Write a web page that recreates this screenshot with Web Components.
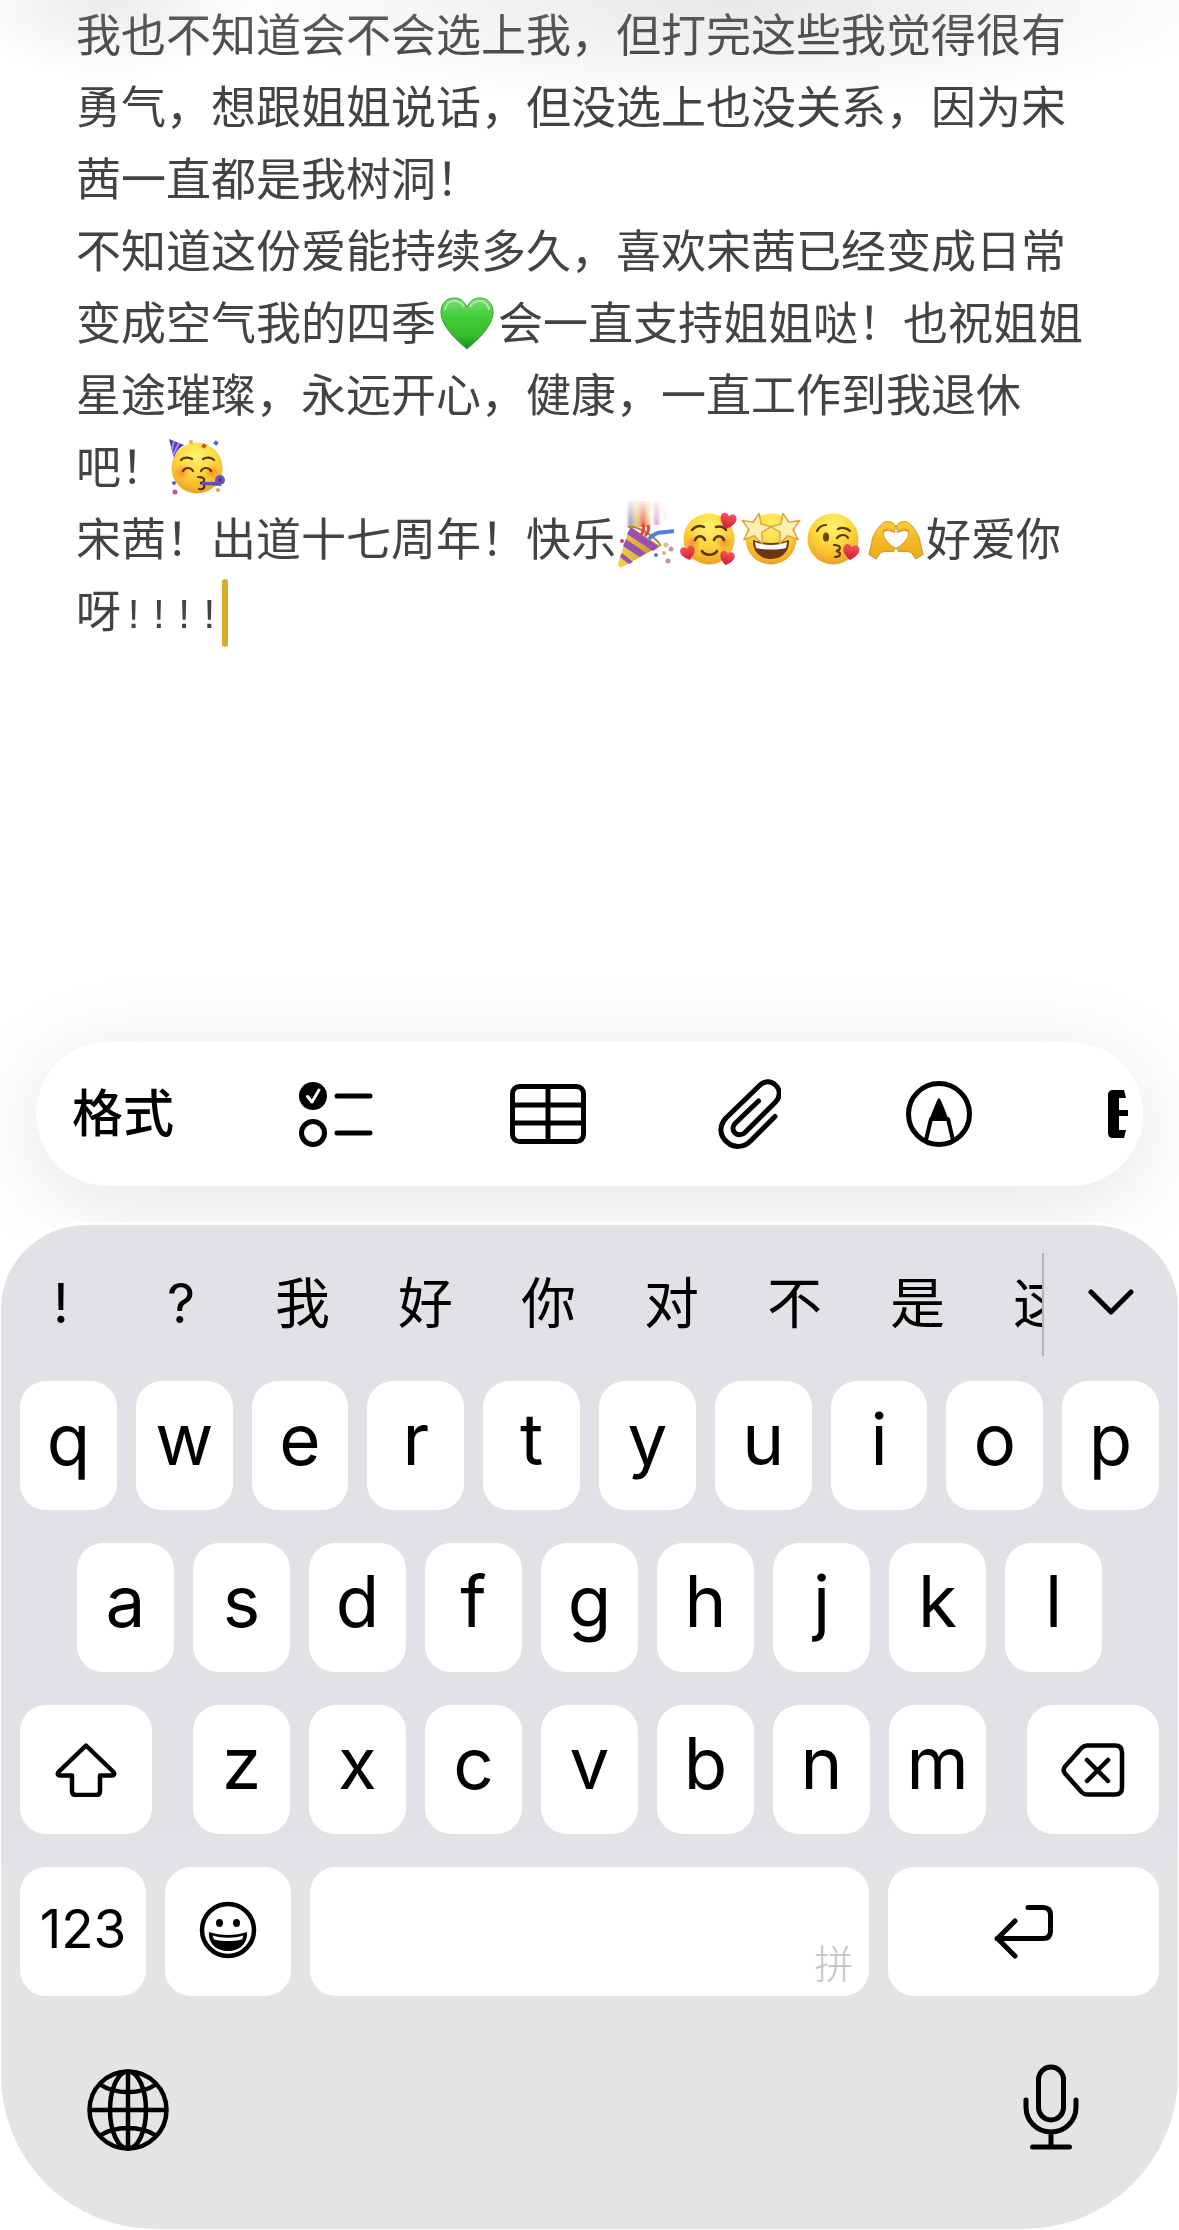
<!DOCTYPE html>
<html lang="zh-CN">
<head>
<meta charset="utf-8">
<meta name="viewport" content="width=device-width, initial-scale=1">
<title>备忘录</title>
<style>
  html, body { margin: 0; background: #fff; }
  body { font-family: Inter, "Noto Sans CJK SC", sans-serif; color: #000; }
</style>
</head>
<body>
<note-app>
  <note-body slot="note">
    <p>我也不知道会不会选上我，但打完这些我觉得很有勇气，想跟姐姐说话，但没选上也没关系，因为宋茜一直都是我树洞！</p>
    <p>不知道这份爱能持续多久，喜欢宋茜已经变成日常变成空气我的四季<emoji-glyph name="heart"></emoji-glyph>会一直支持姐姐哒！也祝姐姐星途璀璨，永远开心，健康，一直工作到我退休吧！<emoji-glyph name="party"></emoji-glyph></p>
    <p>宋茜！出道十七周年！快乐<emoji-glyph name="popper"></emoji-glyph><emoji-glyph name="hearts"></emoji-glyph><emoji-glyph name="stars"></emoji-glyph><emoji-glyph name="kiss"></emoji-glyph><emoji-glyph name="hands"></emoji-glyph>好爱你呀<text-marks>!!!!</text-marks><text-caret></text-caret></p>
  </note-body>
  <format-bar slot="tools">
    <tool-button>格式</tool-button>
    <tool-button label="核对清单"><ui-icon name="checklist"></ui-icon></tool-button>
    <tool-button label="表格"><ui-icon name="table"></ui-icon></tool-button>
    <tool-button label="附件"><ui-icon name="clip"></ui-icon></tool-button>
    <tool-button label="标记"><ui-icon name="marker"></ui-icon></tool-button>
    <tool-button label="更多"><ui-icon name="more"></ui-icon></tool-button>
  </format-bar>
  <soft-keyboard slot="keyboard"></soft-keyboard>
</note-app>

<script>
const define = (name, html, setup) => {
  const tpl = document.createElement('template');
  tpl.innerHTML = html;
  customElements.define(name, class extends HTMLElement {
    constructor() {
      super();
      this.attachShadow({ mode: 'open' }).append(tpl.content.cloneNode(true));
    }
    connectedCallback() { if (setup) setup(this, this.shadowRoot); }
  });
};

/* ---------- line icons: [width, height, markup] ---------- */
const ICONS = {
  checklist: [85, 66, `<circle cx="14" cy="15" r="14" fill="#000" stroke="none"/><path d="M8.500 15.500l4.500 5.500 7-12" stroke="#fff" stroke-width="3"/><circle cx="14" cy="52" r="11.500" stroke-width="5"/><path d="M38 15h33M38 52h33" stroke-width="5"/>`],
  table: [85, 60, `<rect x="3.500" y="2.500" width="71" height="55" rx="7"/><path d="M39 3v54M4 21h70M4 39h70"/>`],
  clip: [63, 70, `<path d="M57 37.500L33 61.500c-7 7.500-17 7.500-23.500 2-8-6.500-9-16-1.500-24.500L41 7c5-5.500 12-5.500 16.500-1 5 4.500 5 12 0 17L27 53.500c-3 3-7.500 3-10 .500-3-3-2.500-7 .500-10L40.500 22" />`],
  marker: [77, 66, `<circle cx="33" cy="33" r="30.500"/><path d="M20 59l5-21h17l5 21" stroke-width="4"/><path d="M33 17c1.500 0 8 17 9.500 22h-19C25 34 31.500 17 33 17z" fill="#000" stroke="none"/>`],
  more: [21, 48, `<path d="M5 0h11l2 8h-7v12h9v6h-9v14h7l-2 8H5c-3 0-5-2-5-5V5c0-3 2-5 5-5z" fill="#000" stroke="none"/>`],
  chevron: [46, 28, `<path d="M3 3l20 20L43 3" />`],
  shift: [62, 54, `<path d="M31 2.500L3.500 29c-1.500 2-.500 3.500 1.500 3.500h12V48c0 2.500 1.500 4 4 4h20c2.500 0 4-1.500 4-4V32.500h12c2 0 3-1.500 1.500-3.500z" stroke-width="4.500"/>`],
  del: [64, 54, `<path d="M26 2.500h28c4.500 0 7 2.500 7 7v35c0 4.500-2.500 7-7 7H26c-2.500 0-4-1-5.500-2.500L4 30.500c-2-2.500-2-4.500 0-7L20.500 5C22 3.500 23.500 2.500 26 2.500z" stroke-width="4.500"/><path d="M26 17l21 21M47 17L26 38" stroke-width="4.500"/>`],
  enter: [60, 56, `<path d="M34 3.500h15c5 0 7.500 2.500 7.500 7.500v16c0 5-2.500 7.500-7.500 7.500H3M21 17L3.500 34.500 21 52" />`],
  smile: [58, 58, `<circle cx="29" cy="29" r="26" stroke-width="4.500"/><ellipse cx="20.500" cy="22" rx="3.500" ry="4" fill="#000" stroke="none"/><ellipse cx="37.500" cy="22" rx="3.500" ry="4" fill="#000" stroke="none"/><path d="M10 31c12 4 26 4 38 0 1 12-8 19-19 19S9 43 10 31z" fill="#000" stroke="none"/><path d="M13.500 34.500c10 3 21 3 31 0l-1.500 4c-9 2-19 2-28 0z" fill="#fff" stroke="none"/>`],
  globe: [82, 82, `<g stroke-width="4.500"><circle cx="41" cy="41" r="38.500"/><ellipse cx="41" cy="41" rx="18" ry="38.500"/><path d="M41 3v76M3 41h76M14 16c14 9.500 40 9.500 54 0M14 66c14-9.500 40-9.500 54 0"/></g>`],
  mic: [58, 92, `<rect x="16.500" y="3" width="25" height="53" rx="12.500"/><path d="M4 36v7c0 14 11 25 25 25s25-11 25-25v-7M29 68v15M10.500 83h37"/>`]
};
define('ui-icon', `<style>:host{display:block}svg{display:block;fill:none;stroke:#000;stroke-width:5;stroke-linecap:round;stroke-linejoin:round}</style>`, (el, root) => {
  const [w, h, body] = ICONS[el.getAttribute('name')];
  root.innerHTML += `<svg width="${w}" height="${h}" viewBox="0 0 ${w} ${h}" aria-hidden="true">${body}</svg>`;
});

/* ---------- colour emoji, drawn on a 62x56 cell ---------- */
const FACE = `<defs><radialGradient id="f" cx=".5" cy=".25" r=".8"><stop offset="0" stop-color="#fff36b"/><stop offset=".5" stop-color="#fdd43a"/><stop offset="1" stop-color="#ee9a1e"/></radialGradient><linearGradient id="r" x2="0" y2="1"><stop offset="0" stop-color="#f9515a"/><stop offset="1" stop-color="#cf1f33"/></linearGradient><radialGradient id="b"><stop offset="0" stop-color="#fb7a2a" stop-opacity=".8"/><stop offset="1" stop-color="#fb8a2a" stop-opacity="0"/></radialGradient></defs>`;
const heart = (x, y, a, s = 1) => `<path transform="translate(${x} ${y}) rotate(${a}) scale(${s})" d="M0 8C-6 4-8.500 0-8-3.500-7.500-8-2-9 0-4.500 2-9 7.500-8 8-3.500 8.500 0 6 4 0 8z" fill="url(#r)"/>`;
const star = (x, y, a) => `<path transform="translate(${x} ${y}) rotate(${a})" d="M0-15l4 10 11 .500-8.500 7.500 3 11L0 8l-9.500 6 3-11-8.500-7.500L-4-5z" fill="#fff0b5" stroke="#dfa43a" stroke-width="1.500" stroke-linejoin="round"/>`;
const EMOJI = {
  heart: ['绿心', `<defs><linearGradient id="g" x2="0" y2="1"><stop offset="0" stop-color="#7fdc79"/><stop offset=".35" stop-color="#44cf3a"/><stop offset=".75" stop-color="#35bb2c"/><stop offset="1" stop-color="#168a1d"/></linearGradient></defs><path d="M31 54C18 43 5 30 5 17 5 8 11 3 18 3c6 0 10 3 13 9 3-6 7-9 13-9 7 0 13 5 13 14 0 13-13 26-26 37z" fill="url(#g)" stroke="#3a9d33" stroke-width="1"/><path d="M9 15c1-6 5-9 9-9s8 2 10 6M34 12c2-4 6-6 10-6s8 3 9 9" fill="none" stroke="#c8f3c4" stroke-width="2" opacity=".7"/>`],
  party: ['派对', `${FACE}<circle cx="31" cy="29" r="25.500" fill="url(#f)"/><circle cx="16" cy="33" r="8" fill="url(#b)"/><circle cx="46" cy="33" r="8" fill="url(#b)"/><path d="M3 0l15 6C13 9 10 13 8 19z" fill="#5a3bb0"/><path d="M8 2l-2 9M13 4l-6 12" stroke="#a98cf0" stroke-width="2"/><path d="M15 21c3-3 8-3 11-1M37 20c3-2 8-2 11 1M17 32c2-4 8-4 10 0M35 32c2-4 8-4 10 0" fill="none" stroke="#5a3510" stroke-width="2.200" stroke-linecap="round"/><path d="M32 38c8 0 8 5 2 6 7 1 5 7-1 6" fill="none" stroke="#4b2a0c" stroke-width="2" stroke-linecap="round"/><path d="M35 43h17l3-2v6l-19-1z" fill="#6a4bb8"/><circle cx="54" cy="41" r="5" fill="#6a55c4"/><circle cx="54" cy="41" r="2" fill="#4a3592"/><rect x="36" y="5" width="4" height="4" fill="#e0433a" transform="rotate(30 38 7)"/><rect x="48" y="2" width="4" height="4" fill="#3f6bd0" transform="rotate(40 50 4)"/><circle cx="25" cy="3" r="2" fill="#f2a84a"/><circle cx="8" cy="44" r="2" fill="#4a62d4"/><circle cx="9" cy="53" r="2.500" fill="#cf4a8e"/><circle cx="52" cy="51" r="2" fill="#f0954c"/>`],
  popper: ['礼花', `<defs><linearGradient id="y"><stop offset="0" stop-color="#f3d451"/><stop offset="1" stop-color="#b98a24"/></linearGradient><linearGradient id="w" x2="0" y2="1"><stop offset="0" stop-color="#fff"/><stop offset="1" stop-color="#fff" stop-opacity="0"/></linearGradient><filter id="s" x="-20%" y="-20%" width="140%" height="140%"><feGaussianBlur stdDeviation="1.500 .5"/></filter></defs><g filter="url(#s)"><rect x="12" y="-10" width="5" height="26" fill="#9ba5bf"/><rect x="17" y="-10" width="7" height="26" fill="#e9c67f"/><rect x="24" y="-10" width="6" height="26" fill="#ec7468"/><rect x="30" y="-10" width="4" height="26" fill="#e6cf85"/><rect x="38" y="-10" width="5" height="24" fill="#e7a4da"/><rect x="47" y="-10" width="4" height="20" fill="#f7eef6"/></g><rect x="6" y="-14" width="52" height="26" fill="url(#w)"/><path d="M14 16l30 19L6 56c-3 1-4-1-4-4z" fill="url(#y)"/><path d="M11 23l26 17 6-4-28-20zM7 35l17 11 6-4-20-14zM4 46l9 7 4-2-11-9z" fill="#9b4fb1"/><path d="M12 16c8-2 26 8 33 19" fill="none" stroke="#b6862d" stroke-width="2"/><path d="M25 24c3-4 3-8 2-11M29 25c4-4 4-8 3-11" stroke="#e4483a" stroke-width="3" fill="none"/><path d="M33 28c8-9 14-6 25-8" fill="none" stroke="#4c83dd" stroke-width="4"/><circle cx="40" cy="44" r="2" fill="#4676e0"/><circle cx="50" cy="34" r="2.500" fill="#e2c07b"/><circle cx="55" cy="38" r="2.500" fill="#bda187"/><circle cx="48" cy="42" r="2" fill="#dfb55a"/><circle cx="52" cy="50" r="2.500" fill="#b995ad"/><circle cx="6" cy="30" r="2" fill="#bd4664"/>`],
  hearts: ['喜爱', `${FACE}<circle cx="31" cy="28" r="25.500" fill="url(#f)"/><circle cx="15" cy="31" r="8" fill="url(#b)"/><circle cx="46" cy="31" r="8" fill="url(#b)"/><path d="M14 19c3-4 8-5 12-3M38 16c4-1 8 0 10 3M17 29c2-5 8-5 10 0M36 29c2-5 8-5 10 0M24 40c3 5 12 5 15 0" fill="none" stroke="#5a3510" stroke-width="2.500" stroke-linecap="round"/>${heart(50, 10, 12)}${heart(10, 42, -15, .9)}${heart(49, 47, 12, .9)}`],
  stars: ['好极了', `${FACE}<circle cx="31" cy="28" r="25.500" fill="url(#f)"/><path d="M13 29c12 4 24 4 36 0 1 11-7 19-18 19S12 40 13 29z" fill="#6b3510"/><path d="M15 31c10 4 22 4 32 0l-1 6c-9 2-21 2-30 0z" fill="#fff"/>${star(16, 17, 12)}${star(46, 17, -12)}`],
  kiss: ['飞吻', `${FACE}<circle cx="31" cy="28" r="25.500" fill="url(#f)"/><path d="M15 20c2-4 5-6 9-6M36 18c4-2 9-1 12 2M35 27c3-4 9-4 11 0M32 34c8 0 7 5 2 6 6 1 5 6-1 6" fill="none" stroke="#5a3510" stroke-width="2.200" stroke-linecap="round"/><ellipse cx="24" cy="26" rx="3" ry="4.500" fill="#6b430f"/>${heart(49, 41, 8)}`],
  hands: ['比心', `<defs><linearGradient id="h" x2="0" y2="1"><stop offset="0" stop-color="#fccb35"/><stop offset="1" stop-color="#e9a91d"/></linearGradient></defs><g transform="translate(3 2) scale(.92)"><g fill="url(#h)" stroke="#d0911a" stroke-width="1"><path d="M31 14c-4-6-12-6-16-1C10 19 6 24 5 33L2 45l8 5 5-7c4-2 9-1 14-1l2-4c-5-2-9-6-12-11-2-4-1-8 2-9 3-2 6 0 9 3z"/><path d="M32 14c4-6 12-6 16-1 5 6 9 11 10 20l3 12-8 5-5-7c-4-2-9-1-14-1l-2-4c5-2 9-6 12-11 2-4 1-8-2-9-3-2-6 0-9 3z"/></g><path d="M17 20c4-2 8-2 12 1M46 20c-4-2-8-2-12 1" fill="none" stroke="#cf8d16" stroke-width="1.500"/></g>`]
};
define('emoji-glyph', `<style>:host{display:inline-block;width:62px;height:56px;vertical-align:-11px}svg{display:block;overflow:visible}</style>`, (el, root) => {
  const [label, body] = EMOJI[el.getAttribute('name')];
  root.innerHTML += `<svg width="62" height="56" viewBox="0 0 62 56" role="img" aria-label="${label}">${body}</svg>`;
});

define('text-marks', `<style>:host{font:42px/1 "Liberation Mono",monospace}</style><slot></slot>`);
define('text-caret', `<style>:host{display:inline-block;width:6px;height:68px;border-radius:3px;background:#d5ad29;vertical-align:-19px}</style>`);

/* ---------- page frame ---------- */
define('note-app', `<style>
  :host{display:flex;flex-direction:column;min-height:100vh;overflow:hidden}
  main{flex:1;display:flex;flex-direction:column}
</style><main><slot name="note"></slot></main><slot name="tools"></slot><slot name="keyboard"></slot>`);

define('note-body', `<style>
  :host{display:block;flex:1;background:
    radial-gradient(ellipse 150px 80px at 9% 0,rgba(0,0,0,.08),transparent),
    radial-gradient(ellipse 520px 110px at 62% 0,rgba(0,0,0,.09),transparent)}
  [role=textbox]{padding:0 87px 0 76px;font-size:45px;line-height:72px;color:#434343;text-spacing-trim:space-all;outline:none;
    -webkit-mask-image:linear-gradient(rgba(0,0,0,.84),#000 72px);mask-image:linear-gradient(rgba(0,0,0,.84),#000 72px)}
  ::slotted(p){margin:0}
</style><div role="textbox" aria-multiline="true" aria-label="备忘录正文"><slot></slot></div>`);

/* ---------- toolbar ---------- */
define('format-bar', `<style>
  :host{display:flex;align-items:center;justify-content:space-between;height:144px;margin:0 36px;padding:0 14px 0 36px;border-radius:72px;box-sizing:border-box;background:#fff;box-shadow:0 14px 90px rgba(0,0,0,.11)}
</style><slot></slot>`);
define('tool-button', `<style>
  :host{display:block}
  button{display:block;margin:0;padding:0;border:0;background:none;color:#000;font:500 51px/72px Inter,"Noto Sans CJK SC",sans-serif}
</style><button type="button"><slot></slot></button>`, (el, root) => {
  if (el.hasAttribute('label')) root.querySelector('button').setAttribute('aria-label', el.getAttribute('label'));
});

/* ---------- keyboard ---------- */
define('key-cap', `<style>
  :host{display:block;flex:97 1 0;min-width:0}
  :host([kind=shift]){flex-grow:132;margin-right:22px}
  :host([kind=delete]){flex-grow:132;margin-left:22px}
  :host([kind=mode]){flex-grow:126}
  :host([kind=space]){flex-grow:560}
  :host([kind=enter]){flex-grow:271}
  button{display:flex;align-items:center;justify-content:center;width:100%;height:129px;margin:0;padding:0 0 12px;border:0;border-radius:26px;background:#fff;color:#000;font:71px/1 Inter,sans-serif}
  :host([kind]) button{padding:0}
  :host([kind=mode]) button{padding-bottom:4px;font-size:53px}
  :host([kind=space]) button{align-items:flex-end;justify-content:flex-end;padding:0 16px;font:300 39px/70px "Noto Sans CJK SC",sans-serif;color:#c4c4c4}
</style><button type="button"><slot></slot></button>`, (el, root) => {
  if (el.hasAttribute('label')) root.querySelector('button').setAttribute('aria-label', el.getAttribute('label'));
});
define('key-row', `<style>:host{display:flex;gap:19px}:host([inset]){padding:0 57px}</style><slot></slot>`);
define('candidate-bar', `<style>
  :host{display:flex;height:103px}
  .list{flex:1;min-width:0;display:flex;overflow:hidden;border-right:2px solid #b2b3b6}
  button{margin:0;padding:0 0 4px;border:0;background:none;color:#000;font:55px/96px Inter,"Noto Sans CJK SC",sans-serif}
  .list button{flex:0 0 123px}
  .list .mark{flex-basis:120px}
  .fold{flex:0 0 134px;display:flex;align-items:center;justify-content:center}
</style><div class="list"></div><button class="fold" type="button" aria-label="展开候选"><ui-icon name="chevron"></ui-icon></button>`, (el, root) => {
  root.querySelector('.list').innerHTML = [...'!?我好你对不是这'].map(c => `<button type="button"${'!?'.includes(c) ? ' class="mark"' : ''}>${c}</button>`).join('');
});
const letters = s => [...s].map(c => `<key-cap>${c}</key-cap>`).join('');
define('soft-keyboard', `<style>
  :host{display:block;margin:36px 1px 1px;border-top:3px solid #fff;border-radius:86px 86px 154px 154px;background:linear-gradient(#e1e2e6 60%,#e3e4e6 64%);position:relative}
  candidate-bar{margin-top:28px}
  .keys{display:flex;flex-direction:column;gap:33px;padding:25px 19px 0}
  .foot{display:flex;align-items:center;justify-content:space-between;height:233px;padding:0 98px 0 86px;box-sizing:border-box}
  .foot button{margin:0;padding:0 0 6px;border:0;background:none}
</style>
<candidate-bar></candidate-bar>
<div class="keys">
  <key-row>${letters('qwertyuiop')}</key-row>
  <key-row inset>${letters('asdfghjkl')}</key-row>
  <key-row><key-cap kind="shift" label="Shift"><ui-icon name="shift"></ui-icon></key-cap>${letters('zxcvbnm')}<key-cap kind="delete" label="删除"><ui-icon name="del"></ui-icon></key-cap></key-row>
  <key-row><key-cap kind="mode">123</key-cap><key-cap kind="mode" label="表情"><ui-icon name="smile"></ui-icon></key-cap><key-cap kind="space">拼</key-cap><key-cap kind="enter" label="换行"><ui-icon name="enter"></ui-icon></key-cap></key-row>
</div>
<div class="foot">
  <button type="button" aria-label="切换键盘"><ui-icon name="globe"></ui-icon></button>
  <button type="button" aria-label="听写"><ui-icon name="mic"></ui-icon></button>
</div>`);
</script>
</body>
</html>
